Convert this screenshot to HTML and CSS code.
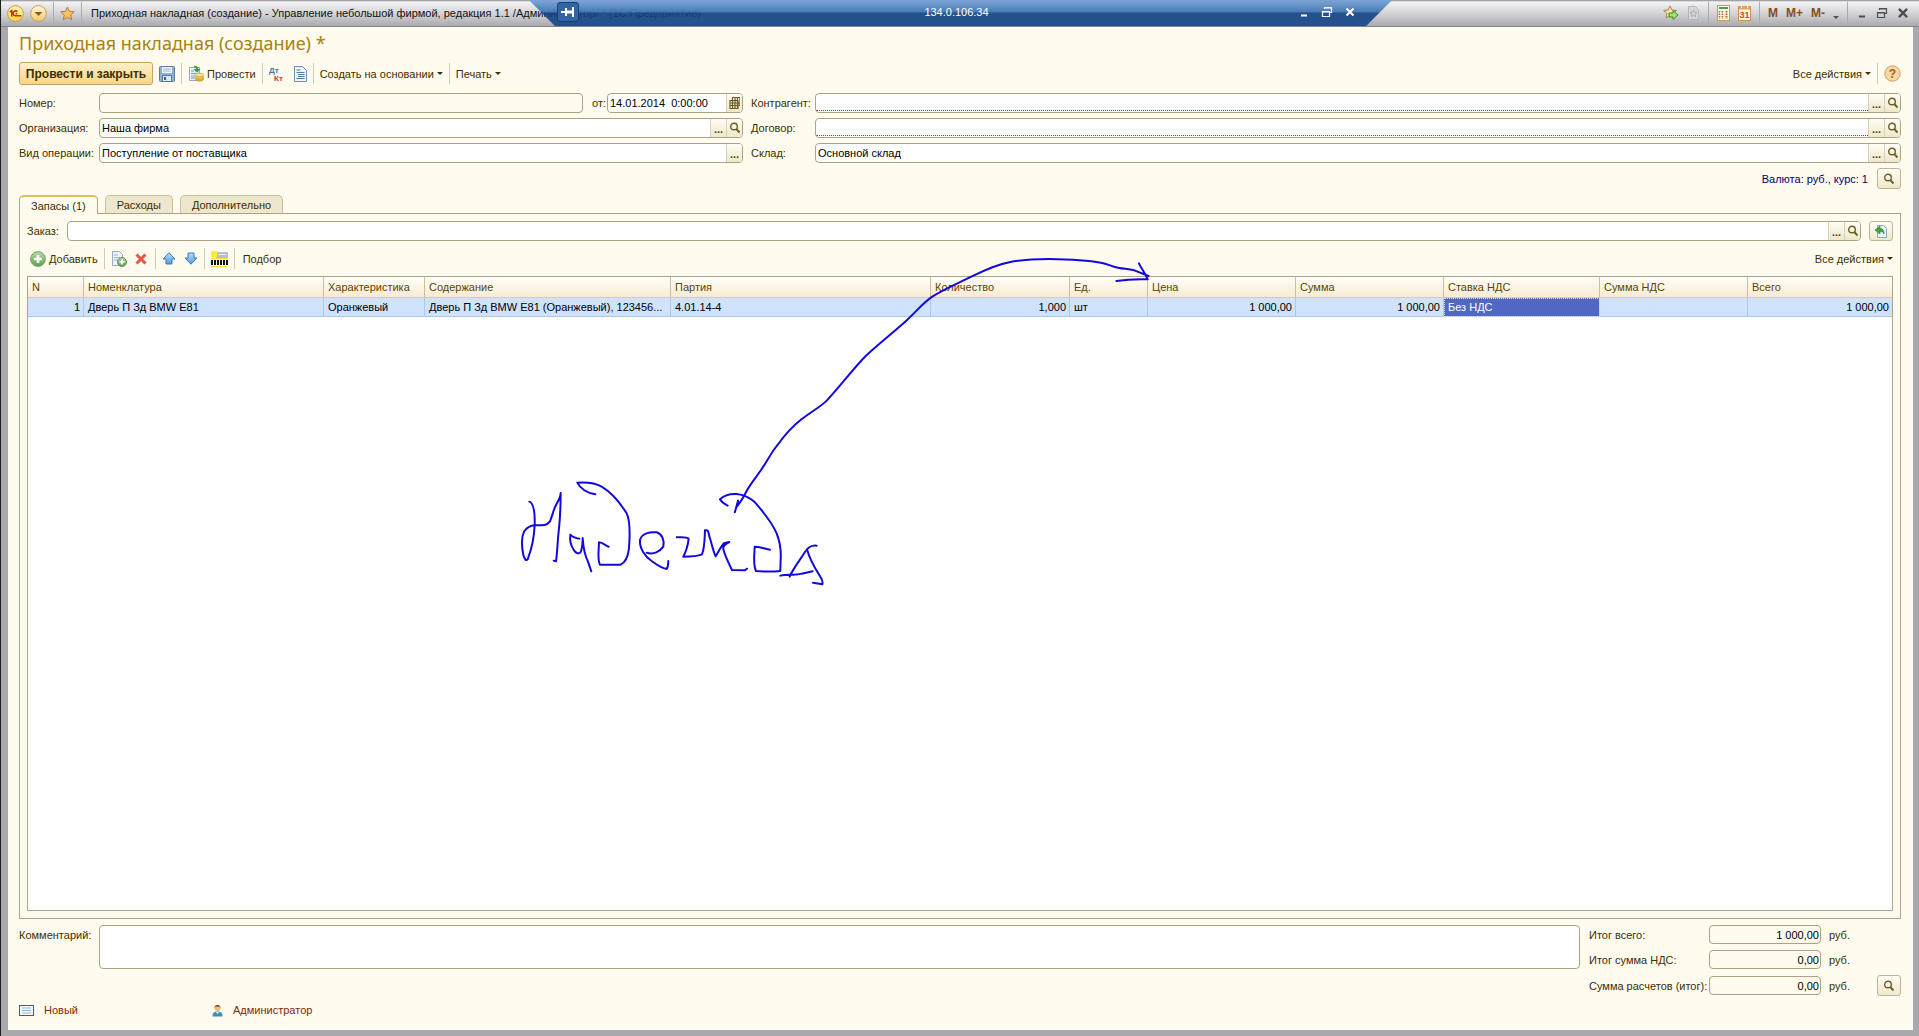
FILE: index.html
```html
<!DOCTYPE html>
<html lang="ru">
<head>
<meta charset="utf-8">
<title>Приходная накладная (создание)</title>
<link rel="stylesheet" href="styles.css">
</head>
<body>
<svg class="defs" aria-hidden="true">
  <defs>
    <linearGradient id="orb" x1="0" y1="0" x2="0" y2="1"><stop offset="0" stop-color="#fffbe0"/><stop offset="1" stop-color="#f6c964"/></linearGradient>
    <linearGradient id="yel" x1="0" y1="0" x2="0" y2="1"><stop offset="0" stop-color="#fff7b0"/><stop offset="1" stop-color="#ffd93c"/></linearGradient>
    <linearGradient id="blu" x1="0" y1="0" x2="0" y2="1"><stop offset="0" stop-color="#b8e0fb"/><stop offset="1" stop-color="#4b9de0"/></linearGradient>
    <linearGradient id="grn" x1="0" y1="0" x2="0" y2="1"><stop offset="0" stop-color="#b9dba8"/><stop offset="1" stop-color="#5c9e50"/></linearGradient>
    <symbol id="lens" viewBox="0 0 12 12"><circle cx="5" cy="4.500" r="3.300" fill="none" stroke="#6b5e2a" stroke-width="1.400"/><path d="M7.300 7l3.200 3.500" stroke="#6b5e2a" stroke-width="1.900"/></symbol>
    <symbol id="restore" viewBox="0 0 12 12"><path d="M3.500 3V1.500h7v5H9M3.500 2h7M1.500 5.500h7v5h-7zM1.500 6h7" fill="none" stroke="currentColor" stroke-width="1.200"/></symbol>
    <symbol id="cross" viewBox="0 0 12 12"><path d="M2.500 2.500l7 7M9.500 2.500l-7 7" stroke="currentColor" stroke-width="2"/></symbol>
    <symbol id="min" viewBox="0 0 12 12"><path d="M3 9.500h6" stroke="currentColor" stroke-width="2"/></symbol>
  </defs>
</svg>

<header class="titlebar">
  <button class="tb" aria-label="Меню"><svg width="17" height="17" viewBox="0 0 17 17"><circle cx="8.500" cy="8.500" r="7.900" fill="url(#yel)" stroke="#c79a50"/><path d="M2.800 7l2-1.300V11.500M10.300 6.800A2.400 2.400 0 1 0 9 10.700h5.500M8.800 8.800h1.400" fill="none" stroke="#d8281c" stroke-width="1.500"/></svg></button>
  <button class="tb" aria-label="Список"><svg width="17" height="17" viewBox="0 0 17 17"><circle cx="8.500" cy="8.500" r="7.900" fill="url(#orb)" stroke="#c99a5c"/><path d="M4.500 7h8l-4 4z" fill="#8c5a2c"/></svg></button>
  <i class="tsep"></i>
  <button class="tb star" aria-label="Избранное"><svg width="15" height="15" viewBox="0 0 15 15"><path d="M7.500 1l2 4.300 4.700.5-3.500 3.200 1 4.700-4.200-2.400-4.200 2.400 1-4.700L.8 5.800l4.700-.5z" fill="#fbc35e" stroke="#b07b45"/></svg></button>
  <i class="tsep"></i>
  <span class="caption">Приходная накладная (создание) - Управление небольшой фирмой, редакция 1.1 /Администратор/ * (1С:Предприятие)</span>
  <div class="tools">
    <button class="tb" aria-label="Добавить в избранное"><svg width="16" height="16" viewBox="0 0 16 16"><path d="M7 1l2 4 4.500.5-3.400 3 1 4.500L7 10.700 3 13l1-4.500-3.400-3L5 5z" fill="#fbe09a" stroke="#a98752"/><path d="M6 8h4V5.500l5 4.500-5 4.500V12H6z" fill="#a5e070" stroke="#3c8a22"/></svg></button>
    <button class="tb" aria-label="Избранные"><svg width="13" height="16" viewBox="0 0 13 16"><path d="M1.500 1.500h7l3 3v10h-10z" fill="#d4d5d9" stroke="#b4b6bb"/><path d="M6.500 5l1 2.300 2.500.2-2 1.700.7 2.500-2.200-1.400-2.200 1.400.7-2.500-2-1.700 2.500-.2z" fill="none" stroke="#aeb0b6"/></svg></button>
    <i class="tsep"></i>
    <button class="tb" aria-label="Калькулятор"><svg width="13" height="16" viewBox="0 0 13 16"><rect x=".5" y=".5" width="12" height="15" fill="#fffbe6" stroke="#c09a66"/><path d="M2 3h9" stroke="#4fa044" stroke-width="2"/><path d="M2.500 6v8M5.500 6v8" stroke="#a86a35" stroke-width="1.600" stroke-dasharray="1.500 1"/><path d="M9.500 6v8" stroke="#d8562c" stroke-width="2" stroke-dasharray="1.500 1"/></svg></button>
    <button class="tb" aria-label="Календарь"><svg width="13" height="16" viewBox="0 0 13 16"><rect x=".5" y="1.500" width="12" height="14" fill="#fffbea" stroke="#c99058"/><path d="M1 3h11" stroke="#f0a060" stroke-width="3"/><path d="M3.500 0v3M9.500 0v3" stroke="#fff"/><text x="6.500" y="13" font-size="9" text-anchor="middle" fill="#d8421c" font-weight="700">31</text></svg></button>
    <i class="tsep"></i>
    <button class="tb mem">M</button><button class="tb mem">M+</button><button class="tb mem">M-</button>
    <button class="tb low" aria-label="Ещё"><i class="caret"></i></button>
    <i class="tsep"></i>
    <button class="tb" aria-label="Свернуть"><svg width="12" height="12"><use href="#min"/></svg></button>
    <button class="tb" aria-label="Развернуть"><svg width="12" height="12"><use href="#restore"/></svg></button>
    <button class="tb" aria-label="Закрыть"><svg width="14" height="14"><use href="#cross"/></svg></button>
  </div>
  <div class="remote">
    <button class="pin" aria-label="Закрепить"><svg width="14" height="12" viewBox="0 0 14 12"><path d="M0 6h4M5 2v8M12 1v10" stroke="#fff" stroke-width="2"/><path d="M5 6h7" stroke="#fff" stroke-width="3"/></svg></button>
    <span class="host">134.0.106.34</span>
    <div class="rbtns">
      <button class="tb" aria-label="Свернуть сеанс"><svg width="12" height="12"><use href="#min"/></svg></button>
      <button class="tb" aria-label="Окно сеанса"><svg width="12" height="12"><use href="#restore"/></svg></button>
      <button class="tb" aria-label="Закрыть сеанс"><svg width="12" height="12"><use href="#cross"/></svg></button>
    </div>
  </div>
</header>

<main class="page">
  <h1>Приходная накладная (создание) *</h1>

  <div class="bar main-bar">
    <button class="primary">Провести и закрыть</button>
    <button class="cmd save" aria-label="Записать"><svg width="16" height="16" viewBox="0 0 16 16"><rect x=".5" y=".5" width="15" height="15" rx="1" fill="#8fb0cc" stroke="#5a7d9e"/><rect x="3" y="1" width="10" height="6" fill="#f2f7fb"/><path d="M4 3h8M4 5h8" stroke="#9cb6cc"/><rect x="3.500" y="9.500" width="9" height="6" fill="#dbe7f1" stroke="#5a7d9e"/><path d="M6 11v3" stroke="#3e6286" stroke-width="2"/></svg></button>
    <i class="sep"></i>
    <button class="cmd"><svg width="16" height="17" viewBox="0 0 16 17"><path d="M1.500 2.500h10v13h-10z" fill="#eaf2f8" stroke="#8faac0"/><path d="M3 6h3M3 8.500h5M3 11h4M3 13h4" stroke="#7f9cb5"/><path d="M6 .8c3 0 4 1 4 3.200h2.500L9 7.800 5.500 4H8c0-1.400-.6-1.800-2-1.800z" fill="#3a9a35"/><ellipse cx="11.500" cy="14" rx="4" ry="2.200" fill="#e8b62e" stroke="#b8862a" stroke-width=".6"/><ellipse cx="11.500" cy="12" rx="4" ry="2" fill="#f5d15a" stroke="#b8862a" stroke-width=".6"/><ellipse cx="11.500" cy="10" rx="4" ry="1.800" fill="#ffe88c" stroke="#b8862a" stroke-width=".6"/></svg>Провести</button>
    <i class="sep"></i>
    <button class="cmd ledger" aria-label="Проводки"><svg width="16" height="16" viewBox="0 0 16 16"><text x="0" y="7" font-size="8" font-weight="700" fill="#4674a4">Дт</text><text x="5" y="15" font-size="8" font-weight="700" fill="#d33a2c">Кт</text></svg></button>
    <button class="cmd report" aria-label="Отчёт"><svg width="13" height="16" viewBox="0 0 13 16"><path d="M.5 .5h8l4 4v11H.5z" fill="#eef4fa" stroke="#6d8fb4"/><path d="M2.500 4h4M2.500 6.500h8M4 8.500h6.500M4 10.500h6.500M2.500 12.500h8" stroke="#5479a4"/></svg></button>
    <i class="sep"></i>
    <button class="cmd">Создать на основании<i class="caret"></i></button>
    <i class="sep"></i>
    <button class="cmd">Печать<i class="caret"></i></button>
    <button class="cmd end">Все действия<i class="caret"></i></button>
    <i class="sep"></i>
    <button class="cmd" aria-label="Справка"><svg width="17" height="17" viewBox="0 0 17 17"><circle cx="8.500" cy="8.500" r="7.700" fill="#fbd9a4" stroke="#d29c60"/><text x="8.500" y="12.500" font-size="12" font-weight="700" text-anchor="middle" fill="#9a5f2e">?</text></svg></button>
  </div>

  <div class="form">
    <div class="col left">
      <div class="row"><label for="num">Номер:</label><div class="field ro"><input id="num" readonly></div><label class="from" for="date">от:</label><div class="field date"><input id="date" value="14.01.2014  0:00:00"><button aria-label="Выбрать дату"><svg width="11" height="12" viewBox="0 0 11 12"><path d="M3 .5h8v8H9M1 3.500h8v8H1zM1 6h10M1 8.500h8M3.500 1v10M6 1v10M8.500 1v10" fill="none" stroke="#6b5e20" stroke-width="1.200"/></svg></button></div></div>
      <div class="row"><label for="org">Организация:</label><div class="field"><input id="org" value="Наша фирма"><button class="dots">...</button><button aria-label="Открыть"><svg width="12" height="12"><use href="#lens"/></svg></button></div></div>
      <div class="row"><label for="op">Вид операции:</label><div class="field"><input id="op" value="Поступление от поставщика"><button class="dots">...</button></div></div>
    </div>
    <div class="col right">
      <div class="row"><label for="agent">Контрагент:</label><div class="field req"><input id="agent"><button class="dots">...</button><button aria-label="Открыть"><svg width="12" height="12"><use href="#lens"/></svg></button></div></div>
      <div class="row"><label for="deal">Договор:</label><div class="field req"><input id="deal"><button class="dots">...</button><button aria-label="Открыть"><svg width="12" height="12"><use href="#lens"/></svg></button></div></div>
      <div class="row"><label for="wh">Склад:</label><div class="field"><input id="wh" value="Основной склад"><button class="dots">...</button><button aria-label="Открыть"><svg width="12" height="12"><use href="#lens"/></svg></button></div></div>
    </div>
  </div>
  <div class="currency"><span>Валюта: руб., курс: 1</span><button class="sq" aria-label="Валюта"><svg width="12" height="12"><use href="#lens"/></svg></button></div>

  <nav class="tabs"><button class="tab on">Запасы (1)</button><button class="tab">Расходы</button><button class="tab">Дополнительно</button></nav>

  <section class="panel">
    <div class="row order"><label for="ord">Заказ:</label><div class="field"><input id="ord"><button class="dots">...</button><button aria-label="Открыть"><svg width="12" height="12"><use href="#lens"/></svg></button></div><button class="sq" aria-label="Заполнить по заказу"><svg width="14" height="15" viewBox="0 0 14 15"><path d="M3.500 1.500h6l3 3v9h-9z" fill="#eaf2fb" stroke="#8aa6c4"/><path d="M1 6l5-4v2.500c3 0 4 2 4 5.500-1-2-2-2.500-4-2.500V10z" fill="#42a63a" stroke="#2a7f26" stroke-width=".6"/></svg></button></div>
    <div class="bar list-bar">
      <button class="cmd"><svg width="16" height="16" viewBox="0 0 16 16"><circle cx="8" cy="8" r="7.400" fill="url(#grn)" stroke="#7c9c6c"/><path d="M8 4v8M4 8h8" stroke="#fff" stroke-width="2.600"/></svg>Добавить</button>
      <i class="sep"></i>
      <button class="cmd" aria-label="Скопировать"><svg width="16" height="16" viewBox="0 0 16 16"><path d="M1.500 .5h7l3 3v11h-10z" fill="#eef4f9" stroke="#93abc2"/><path d="M3 4h4M3 6.500h6M3 9h4" stroke="#9db3c8"/><circle cx="11" cy="11" r="4.500" fill="url(#grn)" stroke="#5f8f50"/><path d="M11 8.500v5M8.500 11h5" stroke="#fff" stroke-width="1.600"/></svg></button>
      <button class="cmd del" aria-label="Удалить"><svg width="12" height="12" viewBox="0 0 12 12"><path d="M1.500 1.500l9 9M10.500 1.500l-9 9" stroke="#e2574a" stroke-width="3"/></svg></button>
      <i class="sep"></i>
      <button class="cmd" aria-label="Вверх"><svg width="14" height="13" viewBox="0 0 14 13"><path d="M7 .8L13 7h-3v5H4V7H1z" fill="url(#blu)" stroke="#3f78b8"/></svg></button>
      <button class="cmd down" aria-label="Вниз"><svg width="14" height="13" viewBox="0 0 14 13"><path d="M7 12.200L13 6h-3V1H4v5H1z" fill="url(#blu)" stroke="#3f78b8"/></svg></button>
      <i class="sep"></i>
      <button class="cmd" aria-label="Штрихкод"><svg width="17" height="16" viewBox="0 0 17 16"><path d="M5 1h12v6H5z" fill="#b9bfce"/><path d="M7 3.500h8" stroke="#e8ebf2"/><path d="M0 0h6v6H0z" fill="#ffef1e"/><path d="M0 7.500h17M0 15.500h17" stroke="#f5d84c"/><path d="M1 9v5M4 9v5M7 9v5M10 9v5M13 9v5M16 9v5" stroke="#111" stroke-width="2"/></svg></button>
      <i class="sep"></i>
      <button class="cmd pick">Подбор</button>
      <button class="cmd end">Все действия<i class="caret"></i></button>
    </div>
    <div class="grid">
      <table>
        <colgroup><col class="c-n"><col class="c-item"><col class="c-char"><col class="c-desc"><col class="c-lot"><col class="c-qty"><col class="c-unit"><col class="c-sum"><col class="c-sum"><col class="c-vat"><col class="c-sum"><col></colgroup>
        <thead><tr><th>N</th><th>Номенклатура</th><th>Характеристика</th><th>Содержание</th><th>Партия</th><th>Количество</th><th>Ед.</th><th>Цена</th><th>Сумма</th><th>Ставка НДС</th><th>Сумма НДС</th><th>Всего</th></tr></thead>
        <tbody><tr><td class="r">1</td><td>Дверь П Зд BMW E81</td><td>Оранжевый</td><td>Дверь П Зд BMW E81 (Оранжевый), 123456...</td><td>4.01.14-4</td><td class="r">1,000</td><td>шт</td><td class="r">1 000,00</td><td class="r">1 000,00</td><td class="cur">Без НДС</td><td></td><td class="r">1 000,00</td></tr></tbody>
      </table>
    </div>
  </section>

  <div class="bottom">
    <label class="clabel" for="com">Комментарий:</label>
    <textarea id="com"></textarea>
    <div class="totals">
      <div class="row"><label for="t1">Итог всего:</label><div class="field ro"><input id="t1" value="1 000,00" readonly></div><span>руб.</span></div>
      <div class="row"><label for="t2">Итог сумма НДС:</label><div class="field ro"><input id="t2" value="0,00" readonly></div><span>руб.</span></div>
      <div class="row"><label for="t3">Сумма расчетов (итог):</label><div class="field ro"><input id="t3" value="0,00" readonly></div><span>руб.</span><button class="sq" aria-label="Расчеты"><svg width="12" height="12"><use href="#lens"/></svg></button></div>
    </div>
  </div>

  <footer class="status">
    <a href="#"><svg width="15" height="11" viewBox="0 0 15 11"><rect x=".5" y=".5" width="14" height="10" fill="#f4f9ff" stroke="#3d5f8c"/><path d="M3 3h9M3 5.500h9M3 8h9" stroke="#8fb4dc"/></svg>Новый</a>
    <a href="#"><svg width="11" height="13" viewBox="0 0 11 13"><path d="M.5 12.500c0-4 2-5 5-5s5 1 5 5z" fill="#3f8cc4"/><path d="M4 8l1.500 2L7 8z" fill="#fff"/><circle cx="5.500" cy="4" r="3" fill="#f2b96c"/><path d="M2.500 4c0-4 6-4 6 0L7.500 2.500h-4z" fill="#5a3a18"/></svg>Администратор</a>
  </footer>
</main>

<svg class="ink" width="640" height="350" viewBox="520 250 640 350" aria-hidden="true">
  <g transform="translate(480 230) scale(.4592 .3333)">
    <path d="M562 812L555 847L558 832C570 812 572 805 578 790C588 762 600 745 612 720C628 688 632 672 648 645C665 612 682 588 700 568C722 545 740 532 755 512C785 468 815 412 840 378C865 345 905 302 930 270C950 245 965 218 985 200C1010 178 1035 164 1070 140C1105 116 1125 104 1155 96C1180 89 1205 87 1240 87C1285 88 1320 90 1352 98C1370 103 1375 110 1392 114C1405 117 1412 116 1425 121L1456 138M1435 100C1440 116 1446 122 1454 148C1430 147 1410 148 1386 153"/>
  </g>
  <g transform="translate(500 460) scale(.3333)">
    <path d="M88 125C102 130 105 160 104 196C102 240 92 275 83 298C78 304 74 298 70 285C65 260 64 232 72 215C80 203 88 197 104 196C125 196 140 198 150 184C158 165 160 150 168 135C176 120 182 112 182 99C182 140 180 180 176 215C172 250 172 280 168 304L161 302"/>
    <path d="M286 103C262 100 240 85 232 68C262 66 285 68 305 80C330 95 360 128 380 160C390 180 390 225 387 265C384 290 375 308 362 314L300 314C292 300 296 280 297 247C308 247 318 258 326 260"/>
    <path d="M238 236C225 235 215 228 211 224C209 240 212 255 220 268C228 280 236 284 242 276C248 262 248 250 248 234C250 265 254 285 264 305L274 334"/>
    <path d="M440 278C460 285 480 275 490 260C494 240 486 222 470 217C450 215 425 220 420 240C418 265 435 290 455 303C470 314 482 324 500 327C506 318 504 312 505 303"/>
    <path d="M530 232C545 232 560 230 566 236C564 255 558 275 550 290C570 290 590 290 606 283C614 265 614 235 615 211C628 208 624 220 630 235C636 255 640 275 647 289C656 275 664 258 672 250L688 246C675 252 668 258 670 268C676 290 686 310 696 330L735 331L741 326"/>
    <path d="M683 137C672 132 664 125 660 118C672 106 690 101 710 102C732 104 752 115 765 127C785 150 815 185 830 220C840 245 844 270 842 300L841 333C815 336 790 335 768 333C758 310 764 285 764 260C780 260 790 266 810 269"/>
    <path d="M950 257C930 255 922 265 915 276C900 300 880 325 869 350M841 347C865 340 885 348 905 341L938 334M921 268C930 300 945 325 958 345C966 357 970 365 967 373L939 368"/>
  </g>
</svg>
</body>
</html>
```
FILE: styles.css
```css
* { box-sizing: border-box; }
body {
  margin: 0;
  min-height: 100vh;
  display: flex;
  flex-direction: column;
  position: relative;
  padding: 0 6px 6px 7px;
  background: #a9a9ad;
  border-left: 1px solid #1c1c1c;
  font: 11px/14px "Liberation Sans", Arial, sans-serif;
  color: #3b2f00;
}
button, input, textarea { font: inherit; color: inherit; margin: 0; }
button { border: 0; background: none; padding: 0; display: inline-flex; align-items: center; justify-content: center; white-space: nowrap; }
svg { display: block; flex: none; }
.defs { position: absolute; width: 0; height: 0; }

.titlebar {
  position: relative;
  height: 27px;
  margin: 0 -6px 0 -7px;
  padding: 0 9px 0 6px;
  display: flex;
  align-items: center;
  gap: 6px;
  background: linear-gradient(#8a8a8f 0, #f3f3f4 2px, #d2d2d5 14px, #a9aaae 26px);
  border-bottom: 1px solid #85868b;
  color: #4a4d54;
}
.tsep { width: 1px; height: 22px; background: #aaabb0; }
.caption { margin-left: 3px; color: #111; white-space: nowrap; }
.tools { margin-left: auto; display: flex; align-items: center; gap: 8px; }
.mem { font-weight: 700; font-size: 12px; color: #8a4a24; }
.low { padding-top: 8px; }
.remote {
  position: absolute;
  top: 0;
  left: 27%;
  right: 27%;
  height: 26px;
  margin: 0 9px 0 10px;
  padding: 0 36px 2px 28px;
  display: grid;
  grid-template-columns: 1fr auto 1fr;
  align-items: center;
  color: #fff;
  clip-path: polygon(0 0, 100% 0, calc(100% - 26px) 100%, 26px 100%);
  background: linear-gradient(rgba(122,163,214,.96) 0, rgba(62,116,181,.94) 12px, rgba(19,65,130,.9) 13px, rgba(22,72,138,.9) 100%);
}
.pin { width: 22px; height: 20px; border: 1px solid #1d3f70; border-radius: 3px; background: #3564a2; }
.rbtns { display: flex; justify-content: flex-end; gap: 11px; }

.page { flex: 1; display: flex; flex-direction: column; padding: 5px 12px 13px 11px; background: #fffbee; }
h1 { margin: 0; font: 18px/22px "Noto Sans", sans-serif; color: #a8820e; }
.bar { display: flex; align-items: center; gap: 6px; }
.main-bar { height: 23px; margin-top: 8px; }
.primary {
  height: 23px;
  width: 134px;
  border: 1px solid #c9a35c;
  border-radius: 3px;
  background: linear-gradient(#fff0c8, #fbd587);
  font: 700 12px/14px "Liberation Sans", Arial, sans-serif;
}
.cmd { gap: 3px; }
.sep { width: 1px; height: 21px; background: #d3ccb4; }
.ledger { padding-right: 3px; }
.caret { width: 0; height: 0; border: 3px solid transparent; border-top: 3px solid currentColor; border-bottom: 0; }
.end { margin-left: auto; }

.form { display: grid; grid-template-columns: 724fr 1150fr; gap: 8px; margin-top: 8px; }
.col { display: flex; flex-direction: column; gap: 5px; }
.row { display: flex; align-items: center; }
.left label { width: 80px; }
.right label { width: 64px; }
.left .from { width: 24px; padding-left: 9px; }
.field {
  flex: 1;
  height: 20px;
  display: flex;
  border: 1px solid #aca384;
  border-radius: 4px;
  background: #fff;
  overflow: hidden;
  color: #000;
}
.ro { background: #fffbee; }
.date { flex: none; width: 136px; }
.field input { flex: 1; width: 0; min-width: 0; border: 0; padding: 0 2px; background: none; outline: 0; }
.date input { white-space: pre; }
.field button { width: 16px; background: linear-gradient(#fffdf4, #efe8cb); border-left: 1px solid #d8d1b4; color: #4d4210; }
.field .dots { font-weight: 700; padding-top: 2px; }
.req input { border-bottom: 1px dotted #c22; margin-bottom: 1px; }
.sq { width: 24px; height: 21px; border: 1px solid #bdb593; border-radius: 3px; background: linear-gradient(#fffdf4, #efe8cb); }
.currency { display: flex; justify-content: flex-end; align-items: center; gap: 9px; height: 21px; margin-top: 5px; color: #000070; }

.tabs { display: flex; gap: 7px; margin-top: 6px; position: relative; }
.tab {
  height: 18px;
  padding: 0 11px;
  border: 1px solid #c9c09c;
  border-bottom: 0;
  border-radius: 5px 5px 0 0;
  background: #efe7cd;
}
.tab.on { height: 19px; margin-bottom: -1px; background: #fffbee; border-color: #aca384; border-top: 2px solid #e3bf5c; }
.panel { flex: 1; display: flex; flex-direction: column; border: 1px solid #aca384; padding: 7px; }
.order label { width: 40px; }
.order .sq { margin-left: 8px; height: 20px; }
.list-bar { height: 35px; padding-left: 3px; }
.del { padding: 0 2px; }
.down { margin-left: 2px; }
.pick { margin-left: 2px; }
.grid { flex: 1; border: 1px solid #aca384; background: #fff; }
table { width: 100%; table-layout: fixed; border-collapse: separate; border-spacing: 0; }
th { height: 21px; padding: 0 4px; text-align: left; font-weight: 400; color: #5a4600; background: linear-gradient(#fffefa, #f7ecd2); border-right: 1px solid #c9bf9c; border-bottom: 1px solid #d8cda8; }
td { height: 19px; padding: 0 4px; color: #000; background: #cfe3ff; border-right: 1px solid #b0c8e8; border-bottom: 1px solid #b0c8e8; white-space: nowrap; overflow: hidden; }
th:last-child, td:last-child { border-right: 0; }
.r { text-align: right; padding: 0 3px; }
.cur { background: #5068c4; color: #fff; outline: 1px dotted #cfe3ff; outline-offset: -1px; }
.c-n { width: 56px; } .c-item { width: 240px; } .c-char { width: 101px; } .c-desc { width: 246px; }
.c-lot { width: 260px; } .c-qty { width: 139px; } .c-unit { width: 78px; } .c-sum { width: 148px; } .c-vat { width: 156px; }

.bottom { display: flex; margin-top: 6px; }
.clabel { width: 80px; padding-top: 3px; }
textarea { flex: 1; height: 44px; border: 1px solid #aca384; border-radius: 4px; background: #fff; resize: none; outline: 0; }
.totals { width: 321px; padding-left: 9px; display: flex; flex-direction: column; gap: 6px; }
.totals label { width: 120px; white-space: nowrap; }
.totals .field { flex: none; width: 112px; height: 19px; }
.totals input { text-align: right; padding: 0 1px; }
.totals span { margin-left: 8px; }
.totals .sq { margin-left: auto; }
.status { display: flex; margin-top: 7px; }
.status a { display: flex; align-items: center; gap: 10px; width: 193px; color: #7d2a0c; text-decoration: none; }

/* Pen annotation drawn over the form */
.ink { position: absolute; left: 519px; top: 250px; pointer-events: none; }
.ink path { fill: none; stroke: #1208dc; stroke-width: 2px; vector-effect: non-scaling-stroke; stroke-linecap: round; stroke-linejoin: round; }
```
